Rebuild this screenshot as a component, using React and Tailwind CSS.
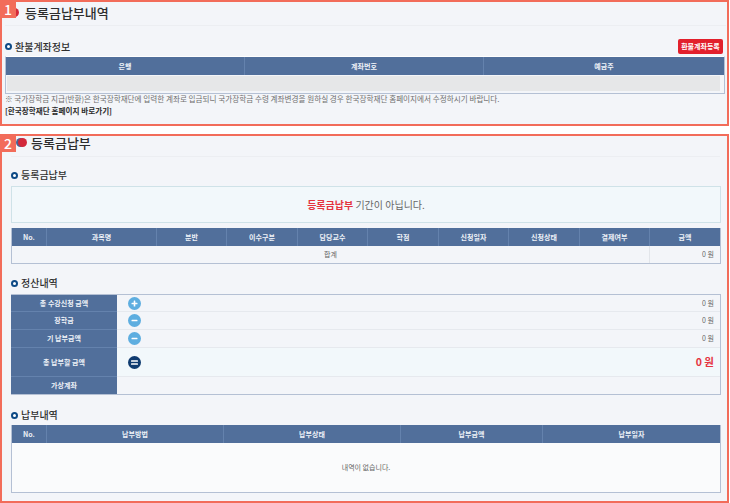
const fontStack = { fontFamily: '"Noto Sans CJK KR", "Noto Sans", sans-serif' };

const refundCols = [239, 239, 240];
const applyCols = [35, 110, 70, 71, 70, 71, 70, 71, 70, 70];
const applyHeads = ['No.', '과목명', '분반', '이수구분', '담당교수', '학점', '신청일자', '신청상태', '결제여부', '금액'];
const payCols = [35, 177, 177, 142, 177];
const payHeads = ['No.', '납부방법', '납부상태', '납부금액', '납부일자'];

const HeadRow = ({ cols, heads }) => (
  <div className="flex h-[18px] bg-[#516f9b]">
    {heads.map((head, i) => (
      <div
        key={head}
        style={{ width: cols[i] }}
        className="flex items-center justify-center border-r border-[#6482ad] text-[7px] font-bold text-[#eef2f8] last:border-r-0"
      >
        {head}
      </div>
    ))}
  </div>
);

const PageTitle = ({ children, textClass, rowClass }) => (
  <div className={`flex items-center border-b border-[#eceef2] ${rowClass}`}>
    <span className="relative block h-[9px] w-[9px] shrink-0">
      <span className="absolute -left-[2px] top-0 block h-[9px] w-[9px] rounded-full bg-[#1e3f78] opacity-80" />
      <span className="absolute left-0 top-0 block h-[9px] w-[9px] rounded-full bg-[#d3283a]" />
    </span>
    <h1 className={`text-[13px] font-medium leading-none text-[#2d2d2d] ${textClass}`}>{children}</h1>
  </div>
);

const SectionTitle = ({ children, className }) => (
  <div className={`flex items-center gap-[3px] ${className}`}>
    <span className="block h-[7px] w-[7px] rounded-full border-2 border-[#0e4a86] bg-white" />
    <h2 className="text-[10px] font-medium leading-none text-[#2f2f2f]">{children}</h2>
  </div>
);

const Badge = ({ children }) => (
  <div className="absolute -left-[2px] -top-[2px] z-10 flex h-[18px] w-[16px] items-center justify-center bg-[#f26c5a] text-[14px] font-medium leading-none text-white">
    {children}
  </div>
);

const SummaryIcon = ({ kind }) => {
  if (kind === 'equal') {
    return (
      <svg width="13" height="13" viewBox="0 0 13 13">
        <circle cx="6.5" cy="6.5" r="6.5" fill="#0f3b70" />
        <rect x="3" y="4.2" width="7" height="1.6" rx="0.6" fill="#fff" />
        <rect x="3" y="7.2" width="7" height="1.6" rx="0.6" fill="#fff" />
      </svg>
    );
  }
  return (
    <svg width="13" height="13" viewBox="0 0 13 13">
      <circle cx="6.5" cy="6.5" r="6.5" fill="#5eaee0" />
      <rect x="3.5" y="5.7" width="6" height="1.6" rx="0.5" fill="#fff" />
      {kind === 'plus' && <rect x="5.7" y="3.5" width="1.6" height="6" rx="0.5" fill="#fff" />}
    </svg>
  );
};

const summaryRows = [
  { label: '총 수강신청 금액', icon: 'plus', amount: '0 원', height: 'h-[17px]' },
  { label: '장학금', icon: 'minus', amount: '0 원', height: 'h-[18px]' },
  { label: '기 납부금액', icon: 'minus', amount: '0 원', height: 'h-[18px]' },
  { label: '총 납부할 금액', icon: 'equal', amount: '0 원', height: 'h-[29px]', total: true },
  { label: '가상계좌', height: 'h-[17px]', last: true },
];

const App = () => (
  <div style={fontStack} className="h-[503px] w-[730px] overflow-hidden bg-white">
    {/* 1 */}
    <section className="relative h-[126px] w-[729px] border-2 border-[#f26c5a] bg-[#f3f5f9]">
      <Badge>1</Badge>
      <PageTitle rowClass="ml-[3px] mr-[1px] h-[24px] pb-[3px] pl-[5px]" textClass="ml-[6px]">등록금납부내역</PageTitle>

      <div className="ml-[3px] mt-[13px] flex h-[15px] w-[718px] items-center justify-between">
        <SectionTitle>환불계좌정보</SectionTitle>
        <button className="flex h-[15px] w-[45px] items-center justify-center rounded-[2px] bg-[#e2202c] text-[7px] font-bold text-white">
          환불계좌등록
        </button>
      </div>

      <div className="ml-[3px] mt-[2px] h-[38px] w-[720px] border border-t-white border-[#b4c0d4]">
        <HeadRow cols={refundCols} heads={['은행', '계좌번호', '예금주']} />
        <div className="ml-[1px] mr-[4px] mt-[1px] h-[15px] bg-[#e6e7e8]" />
      </div>

      <p className="ml-[3px] text-[7.6px] leading-[9px] text-[#6f6f6f]">
        ※ 국가장학금 지급(반환)은 한국장학재단에 입력한 계좌로 입금되니 국가장학금 수령 계좌변경을 원하실 경우 한국장학재단 홈페이지에서 수정하시기 바랍니다.
      </p>
      <p className="ml-[3px] mt-[2px] text-[7.6px] font-bold leading-[11px] text-[#2b2b2b]">[한국장학재단 홈페이지 바로가기]</p>
    </section>

    {/* 2 */}
    <section className="relative mt-[8px] h-[369px] w-[729px] border-2 border-[#f26c5a] bg-[#f3f5f9] pl-[9px] pr-[7px]">
      <Badge>2</Badge>
      <PageTitle rowClass="h-[21px] pb-[8px] pl-[7px]" textClass="ml-[4px]">등록금납부</PageTitle>

      <SectionTitle className="mt-[10px] h-[16px]">등록금납부</SectionTitle>

      <div className="mt-[3px] flex h-[37px] w-[710px] items-center justify-center border border-[#cfe2e8] bg-[#f2f8fb] text-[10px] text-[#666]">
        <span className="font-bold text-[#e5333f]">등록금납부</span>&nbsp;기간이 아닙니다.
      </div>

      <div className="mt-[5px] h-[36px] w-[710px] border-b border-l border-r border-[#b4c0d4]">
        <HeadRow cols={applyCols} heads={applyHeads} />
        <div className="flex h-[17px] items-center text-[7px] text-[#666]">
          <div className="w-[637px] text-center">합계</div>
          <div className="flex h-full flex-1 items-center justify-end border-l border-[#e2e5ea] pr-[6px]">0 원</div>
        </div>
      </div>

      <SectionTitle className="mt-[11px] h-[16px]">정산내역</SectionTitle>

      <div className="mt-[3px] w-[710px] border-b border-r border-t border-[#b4c0d4]">
        {summaryRows.map((row) => (
          <div key={row.label} className={`flex ${row.height} ${row.total ? 'bg-[#f2f8fb]' : ''}`}>
            <div className={`flex w-[106px] items-center justify-center bg-[#516f9b] text-[7px] font-bold text-[#eef2f8] ${row.last ? '' : 'border-b border-[#6482ad]'}`}>
              {row.label}
            </div>
            <div className={`flex flex-1 items-center justify-between pl-[11px] pr-[6px] ${row.last ? '' : 'border-b border-[#e6e9ee]'}`}>
              {row.icon ? <SummaryIcon kind={row.icon} /> : <span />}
              {row.amount && (
                <span className={row.total ? 'text-[10.5px] font-bold text-[#e5333f]' : 'text-[7px] text-[#666]'}>{row.amount}</span>
              )}
            </div>
          </div>
        ))}
      </div>

      <SectionTitle className="mt-[12px] h-[16px]">납부내역</SectionTitle>

      <div className="mt-[2px] h-[68px] w-[710px] border-b border-l border-r border-[#b4c0d4] bg-[#fafbfc]">
        <HeadRow cols={payCols} heads={payHeads} />
        <div className="flex h-[49px] items-center justify-center text-[7px] text-[#666]">내역이 없습니다.</div>
      </div>
    </section>
  </div>
);

export default App;
